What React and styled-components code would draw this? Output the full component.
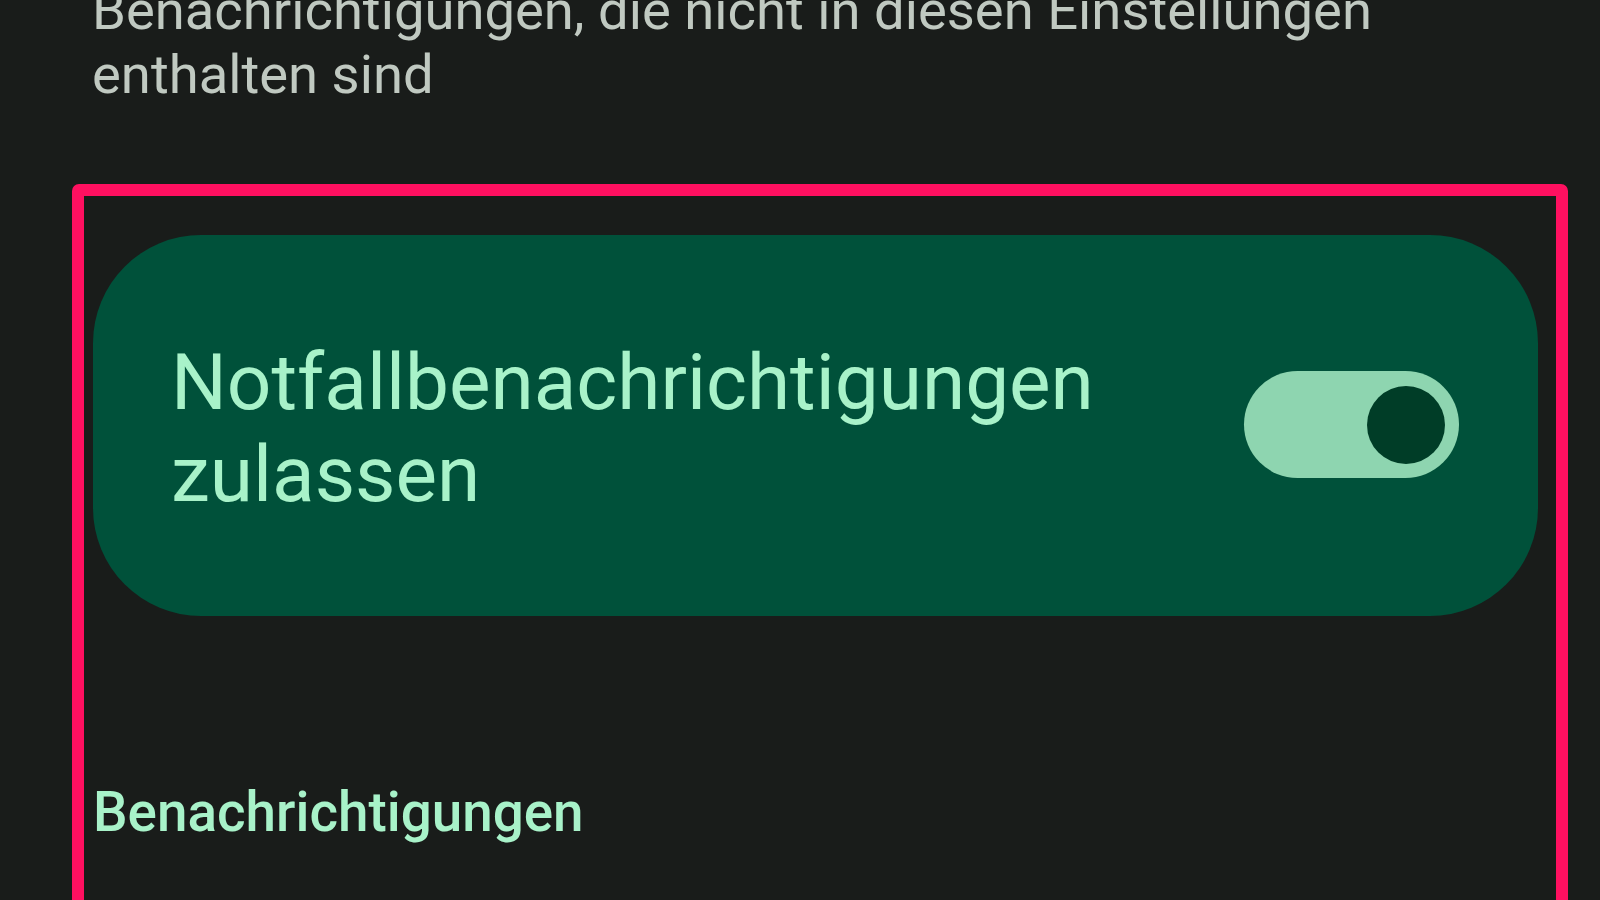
import React, { useState } from "react";
import styled, { createGlobalStyle } from "styled-components";

const GlobalStyle = createGlobalStyle`
  html, body {
    margin: 0;
    padding: 0;
    height: 100%;
    background: #191c1a;
    overflow: hidden;
  }
  body {
    font-family: Roboto, "Noto Sans", "Liberation Sans", sans-serif;
  }
`;

const Page = styled.div`
  width: 1600px;
  height: 900px;
  overflow: hidden;
  background: #191c1a;
  padding-left: 72px;
  box-sizing: border-box;
`;

const Description = styled.p`
  margin: -21px 0 0 20px;
  max-width: 1420px;
  font-size: 54.4px;
  line-height: 64px;
  font-weight: 400;
  color: #c0c9c1;
`;

// highlight frame drawn round the section in the screenshot
const Frame = styled.section`
  margin-top: 77px;
  width: 1496px;
  height: 760px;
  box-sizing: border-box;
  border: 12px solid #ff1060;
  border-radius: 7px;
  padding: 39px 18px 0 9px;
`;

const MainSwitchCard = styled.label`
  display: flex;
  align-items: center;
  justify-content: space-between;
  height: 381px;
  box-sizing: border-box;
  padding: 4px 79px 0 78px;
  background: #00513a;
  border-radius: 108px;
  cursor: pointer;
`;

const CardTitle = styled.span`
  font-size: 78.3px;
  line-height: 92px;
  font-weight: 400;
  color: #a8f2c9;
`;

const Track = styled.button`
  flex: none;
  display: flex;
  align-items: center;
  justify-content: ${(p) => (p.checked ? "flex-end" : "flex-start")};
  width: 215px;
  height: 107px;
  margin-top: -6px;
  padding: 0 14px;
  box-sizing: border-box;
  border: none;
  border-radius: 54px;
  background: ${(p) => (p.checked ? "#8ed5b0" : "#3f4943")};
  cursor: pointer;
`;

const Thumb = styled.span`
  width: 78px;
  height: 78px;
  border-radius: 50%;
  background: ${(p) => (p.checked ? "#003d27" : "#8a938c")};
`;

const SectionHeading = styled.h3`
  margin: 164px 0 0;
  font-size: 54.8px;
  line-height: 64px;
  font-weight: 500;
  color: #a8f2c9;
`;

export default function App() {
  const [allowed, setAllowed] = useState(true);

  return (
    <>
      <GlobalStyle />
      <Page>
        <Description>
          Benachrichtigungen, die nicht in diesen Einstellungen enthalten sind
        </Description>
        <Frame>
          <MainSwitchCard>
            <CardTitle>
              Notfallbenachrichtigungen
              <br />
              zulassen
            </CardTitle>
            <Track
              role="switch"
              aria-checked={allowed}
              checked={allowed}
              onClick={() => setAllowed(!allowed)}
            >
              <Thumb checked={allowed} />
            </Track>
          </MainSwitchCard>
          <SectionHeading>Benachrichtigungen</SectionHeading>
        </Frame>
      </Page>
    </>
  );
}
